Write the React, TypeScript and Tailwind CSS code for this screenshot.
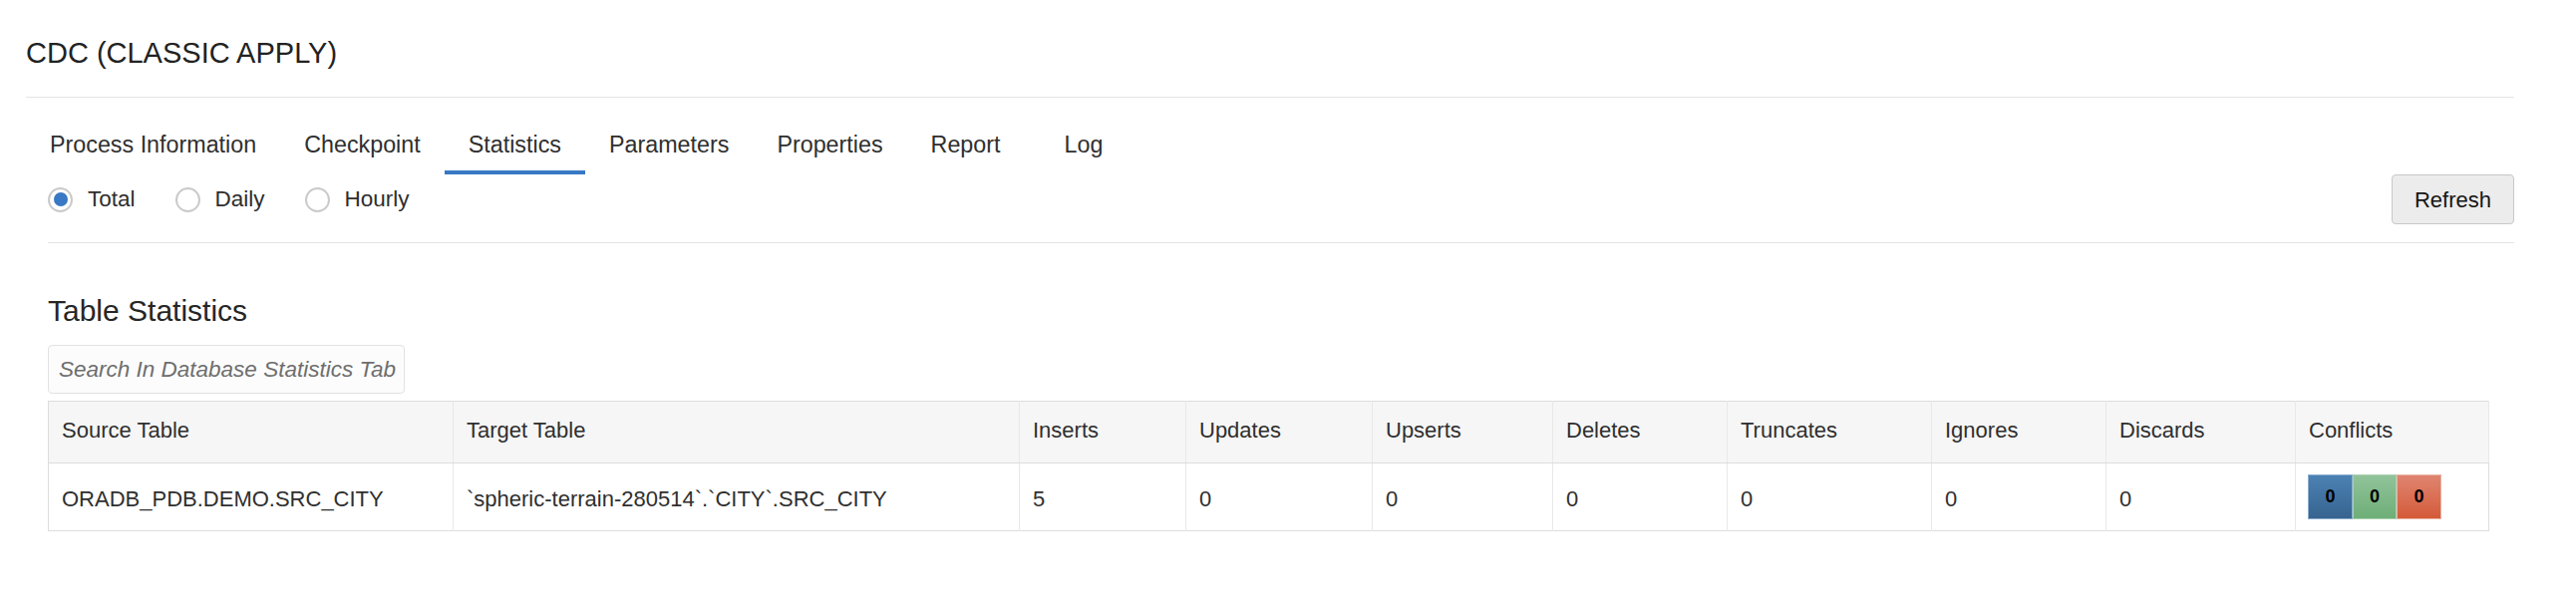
import React from "react";

const tabs = ["Process Information", "Checkpoint", "Statistics", "Parameters", "Properties", "Report", "Log"];

const columns: { label: string; w: string }[] = [
  { label: "Source Table", w: "w-[406px]" },
  { label: "Target Table", w: "w-[568px]" },
  { label: "Inserts", w: "w-[167px]" },
  { label: "Updates", w: "w-[187px]" },
  { label: "Upserts", w: "w-[181px]" },
  { label: "Deletes", w: "w-[175px]" },
  { label: "Truncates", w: "w-[205px]" },
  { label: "Ignores", w: "w-[175px]" },
  { label: "Discards", w: "w-[190px]" },
  { label: "Conflicts", w: "w-[194px]" },
];

const row = [
  "ORADB_PDB.DEMO.SRC_CITY",
  "`spheric-terrain-280514`.`CITY`.SRC_CITY",
  "5",
  "0",
  "0",
  "0",
  "0",
  "0",
  "0",
];

function Radio({ label, checked }: { label: string; checked?: boolean }) {
  return (
    <label className="flex items-center gap-[15px]">
      <span className="flex h-[25px] w-[25px] items-center justify-center rounded-full border-2 border-[#cacaca] bg-white">
        {checked && <span className="h-[14px] w-[14px] rounded-full bg-[#3878c4]" />}
      </span>
      <span className="text-[22.5px] leading-[28px] text-[#2e2e2e]">{label}</span>
    </label>
  );
}

export default function App() {
  return (
    <div className="min-h-[614px] w-[2584px] bg-white pl-[26px] pr-[62px] font-['Liberation_Sans',Arial,sans-serif] text-[#2f2f2f]">
      <h1 className="pt-[35px] text-[29px] leading-[36px] text-[#222]">CDC (CLASSIC APPLY)</h1>
      <div className="mt-[26px] h-px bg-[#e4e4e4]" />

      <div className="mt-[21px] flex">
        {tabs.map((t) => (
          <div
            key={t}
            className={
              t === "Statistics"
                ? "border-b-4 border-[#3878c4] px-[24px] pt-[12px] pb-[12px] text-[23.3px] leading-[28px] text-[#2f2f2f]"
                : t === "Log"
                ? "ml-[16px] border-b-4 border-transparent px-[24px] pt-[12px] pb-[12px] text-[23.3px] leading-[28px] text-[#2f2f2f]"
                : "border-b-4 border-transparent px-[24px] pt-[12px] pb-[12px] text-[23.3px] leading-[28px] text-[#2f2f2f]"
            }
          >
            {t}
          </div>
        ))}
      </div>

      <div className="pl-[22px]">
        <div className="flex h-[50px] items-center justify-between">
          <div className="flex items-center gap-[40px]">
            <Radio label="Total" checked />
            <Radio label="Daily" />
            <Radio label="Hourly" />
          </div>
          <button className="h-[50px] w-[123px] rounded-[4px] border border-[#c8c8c8] bg-[#ececec] text-[22px] text-[#161616]">
            Refresh
          </button>
        </div>
        <div className="mt-[18px] h-px bg-[#e4e4e4]" />

        <h2 className="mt-[50px] text-[30px] leading-[36px] text-[#262626]">Table Statistics</h2>

        <input
          className="mt-[16px] block h-[49px] w-[358px] rounded-[4px] border border-[#e2e2e2] bg-[#fcfcfc] pl-[10px] pr-[8px] text-[22.5px] outline-none placeholder:italic placeholder:text-[#6e6e6e]"
          placeholder="Search In Database Statistics Table"
        />

        <table className="mt-[7px] table-fixed border-collapse border border-[#dddddd] text-[22px] text-[#2f2f2f]">
          <colgroup>
            {columns.map((c) => (
              <col key={c.label} className={c.w} />
            ))}
          </colgroup>
          <thead>
            <tr className="h-[62px] bg-[#f6f6f6]">
              {columns.map((c) => (
                <th
                  key={c.label}
                  className="border-r border-b border-r-[#e8e8e8] border-b-[#dddddd] pl-[13px] pb-[5px] text-left font-normal"
                >
                  {c.label}
                </th>
              ))}
            </tr>
          </thead>
          <tbody>
            <tr className="h-[68px]">
              {row.map((v, i) => (
                <td key={i} className="border-r border-[#e8e8e8] pl-[13px] pt-[4px] whitespace-nowrap">
                  {v}
                </td>
              ))}
              <td className="pl-[12px]">
                <div className="flex">
                  <div className="flex h-[45px] w-[45px] items-center justify-center border border-[#8aaccd] bg-linear-to-b from-[#4c82b4] to-[#37648f] text-[18px] font-bold text-black">
                    0
                  </div>
                  <div className="flex h-[45px] w-[44px] items-center justify-center border border-[#a9d0ae] bg-linear-to-b from-[#91c39a] to-[#6eae77] text-[18px] font-bold text-black">
                    0
                  </div>
                  <div className="flex h-[45px] w-[45px] items-center justify-center border border-[#eab3a3] bg-linear-to-b from-[#df8470] to-[#d45a38] text-[18px] font-bold text-black">
                    0
                  </div>
                </div>
              </td>
            </tr>
          </tbody>
        </table>
      </div>
    </div>
  );
}
